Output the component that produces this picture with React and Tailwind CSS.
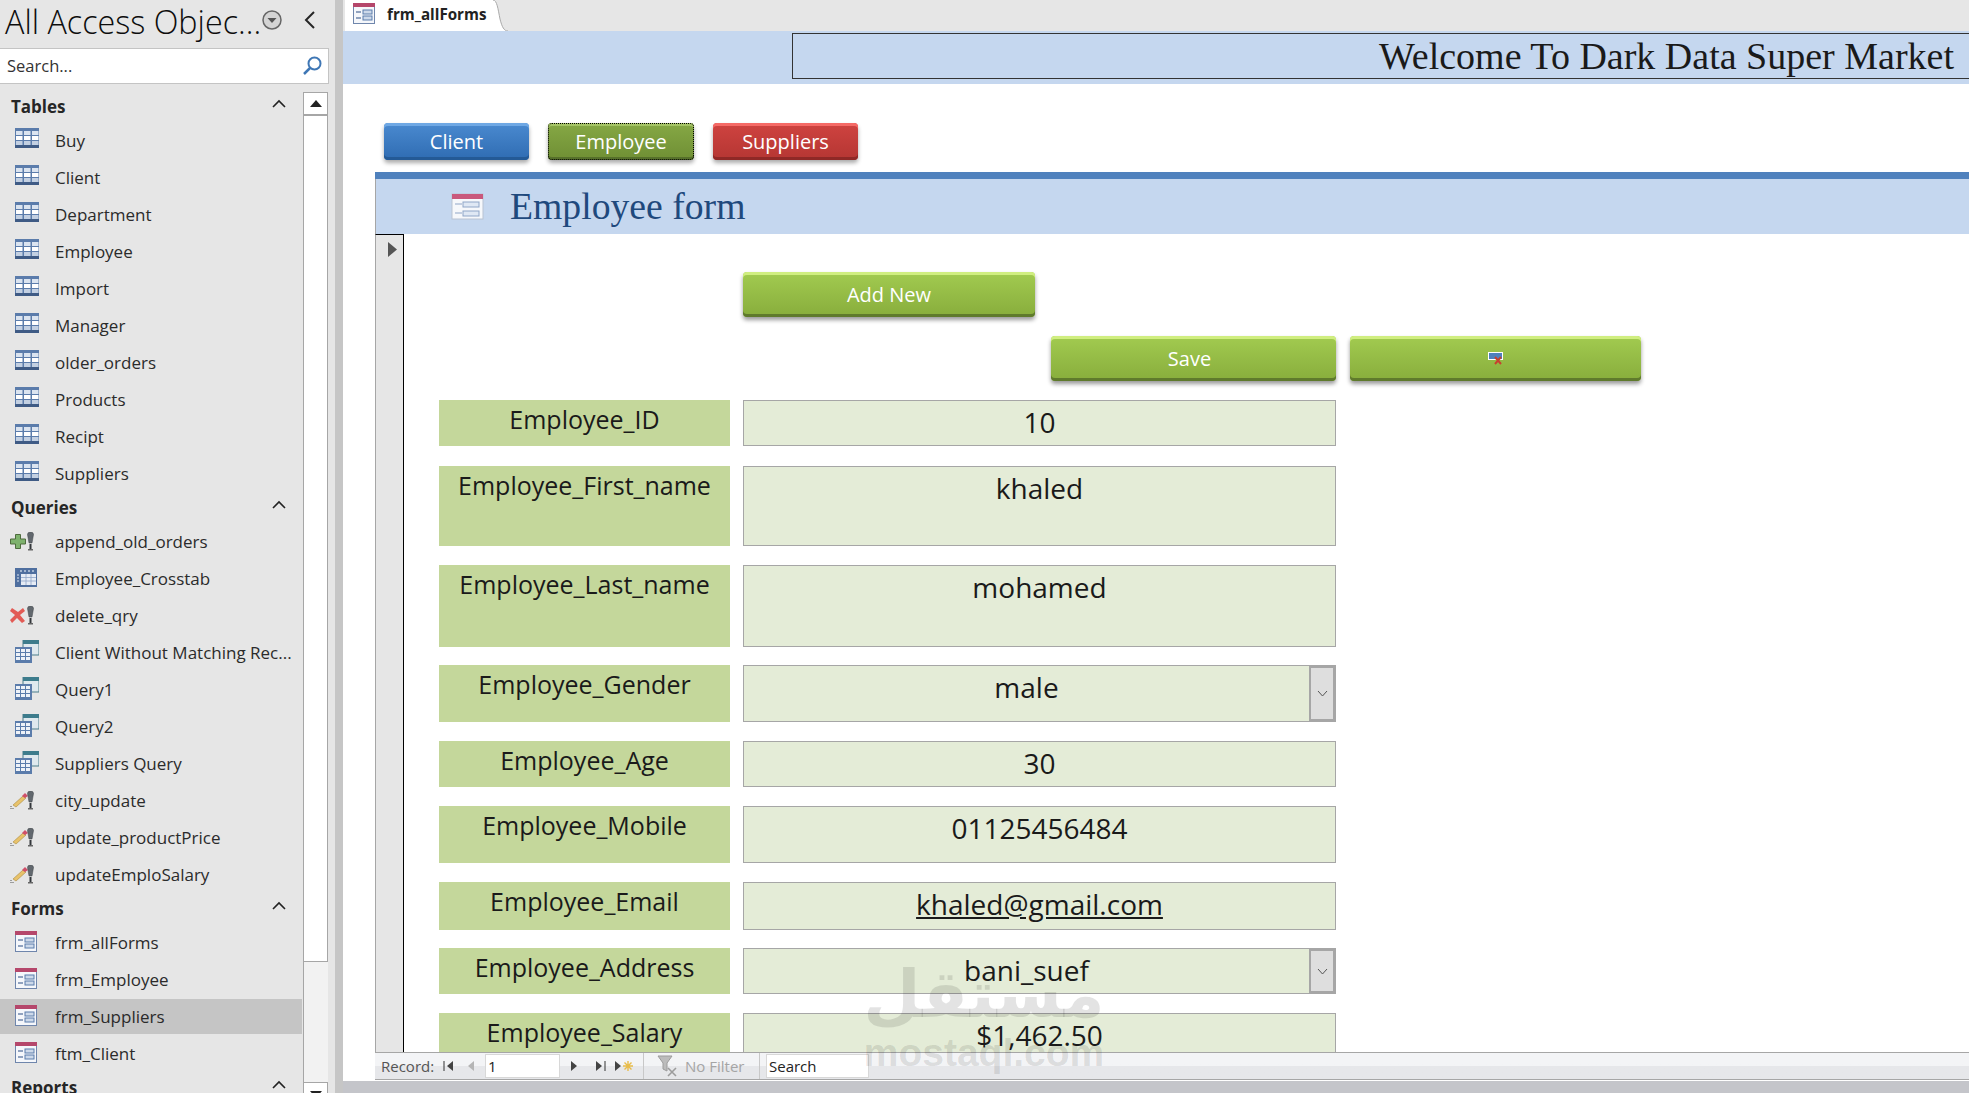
const sans = "font-['Open_Sans',sans-serif]"

function TableIcon() {
  return (
    <svg width="24" height="20" viewBox="0 0 24 20" className="shrink-0 -translate-y-[3px]">
      <rect width="24" height="20" fill="#5b7cab" />
      <rect y="17" width="24" height="3" fill="#3f5b85" />
      {[3, 8, 13].map((y) =>
        [1, 9, 17].map((x) => <rect key={x + "-" + y} x={x} y={y} width="6.5" height="4" fill={y === 8 ? "#ffffff" : y === 3 ? "#dbe4f0" : "#c3d0e2"} />)
      )}
    </svg>
  )
}

function FormIcon() {
  return (
    <svg width="22" height="21" viewBox="0 0 22 21" className="shrink-0 -translate-y-[1px]">
      <rect x="0.5" y="0.5" width="21" height="20" fill="#f5f7fb" stroke="#6f86ac" />
      <rect width="22" height="4" fill="#b5476b" />
      <path d="M3 9h5M3 15h5" stroke="#6f86ac" strokeWidth="1.5" />
      <rect x="10" y="7" width="9" height="4" fill="#cdd9ea" stroke="#5b7cab" />
      <rect x="10" y="13" width="9" height="4" fill="#cdd9ea" stroke="#5b7cab" />
    </svg>
  )
}

function SelectQueryIcon() {
  return (
    <svg width="24" height="23" viewBox="0 0 24 23" className="shrink-0 -translate-y-[1px]">
      <rect x="8" y="0" width="16" height="15" fill="#dfe9ee" stroke="#4a7d8a" />
      <rect x="8" y="0" width="16" height="4" fill="#3d7c8c" />
      <rect x="0" y="7" width="17" height="16" fill="#5b7cab" />
      {[9, 13, 17].map((y) => [1, 6, 11].map((x) => <rect key={x + "-" + y} x={x} y={y} width="4" height="3" fill="#eef2f8" />))}
    </svg>
  )
}

function CrosstabIcon() {
  return (
    <svg width="22" height="19" viewBox="0 0 22 19" className="shrink-0 -translate-y-[1px]">
      <rect width="22" height="19" fill="#4f6f9f" />
      <path d="M6 2v2M10 2v2M14 2v2M18 2v2M2 7h2M2 10h2M2 13h2" stroke="#dbe4f0" strokeWidth="1.2" />
      <rect x="6" y="6" width="15" height="11" fill="#e6ecf5" />
      <path d="M6 9.5h15M6 13h15M11 6v11M16 6v11" stroke="#8fa6c8" strokeWidth="0.8" />
    </svg>
  )
}

function ActionIcon({ type }) {
  return (
    <svg width="26" height="20" viewBox="0 0 26 20" className="shrink-0 -ml-[5px]">
      {type === "add" && <path d="M5.5 2.5h5v4.5h5v5h-5v4.5h-5V12H.5V7h5z" fill="#7eb26d" stroke="#4e6b3d" />}
      {type === "delete" && <path d="M2 2l6 4 5-4 2 3-5 4 5 6-3 2-5-5-5 5-2-3 5-5-5-4z" fill="#e25b55" />}
      {type === "update" && (
        <g>
          <path d="M3 14l10-9 3 2-10 9z" fill="#e8c26a" stroke="#a98a3f" strokeWidth="0.6" />
          <path d="M12 5l3-3 3 3-3 2z" fill="#d0506a" />
          <path d="M1 15v4M3 17v2" stroke="#555" strokeDasharray="1 1" />
        </g>
      )}
      <path d="M17.5 2.5Q17.5 0 20.5 0T23.5 2.5L22 11h-3z" fill="#62686e" stroke="#3c4045" strokeWidth="0.5" />
      <rect x="19.5" y="12" width="2" height="5" fill="#33373b" />
      <rect x="18" y="17" width="5" height="1.5" fill="#666" />
    </svg>
  )
}

function Chevron() {
  return (
    <svg width="14" height="9" viewBox="0 0 14 9">
      <path d="M1 8l6-6 6 6" fill="none" stroke="#222" strokeWidth="1.6" />
    </svg>
  )
}

function Section({ title }) {
  return (
    <div className="h-[31px] flex items-center justify-between pl-[11px] pr-[17px]">
      <span className="font-bold text-[17px] text-[#262626] leading-normal">{title}</span>
      <span className="-mt-[6px] flex"><Chevron /></span>
    </div>
  )
}

function Item({ label, icon, selected }) {
  return (
    <div className="h-[37px] flex items-center">
      <div className={"w-[302px] h-[35px] flex items-center " + (selected ? "bg-[#c5c5c5]" : "")}>
        <span className="w-[55px] pl-[15px] flex items-center shrink-0">{icon}</span>
        <span className="text-[17px] text-[#2b2b2b] leading-normal whitespace-nowrap">{label}</span>
      </div>
    </div>
  )
}

function Sidebar() {
  const tables = ["Buy", "Client", "Department", "Employee", "Import", "Manager", "older_orders", "Products", "Recipt", "Suppliers"]
  return (
    <div className="w-[335px] shrink-0 h-full bg-[#e6e6e6] flex flex-col overflow-hidden">
      <div className="h-[48px] shrink-0 flex items-center pl-[5px] pb-[8px]">
        <span className="w-[257px] text-[32.3px] font-light text-[#0d0d0d] leading-normal whitespace-nowrap translate-y-[1px]">All Access Objec...</span>
        <svg width="20" height="20" viewBox="0 0 20 20">
          <circle cx="10" cy="10" r="9" fill="#d4d4d4" stroke="#666" strokeWidth="1.5" />
          <path d="M5.5 8h9L10 13z" fill="#555" />
        </svg>
        <svg width="12" height="18" viewBox="0 0 12 18" className="ml-[22px]">
          <path d="M10 1L2 9l8 8" fill="none" stroke="#262626" strokeWidth="2" />
        </svg>
      </div>
      <div className="h-[36px] shrink-0 w-[329px] bg-white border border-[#c4c4c4] border-l-0 flex items-center justify-between pl-[7px] pr-[6px]">
        <span className="text-[16.5px] text-[#333] pt-px">Search...</span>
        <svg width="20" height="20" viewBox="0 0 20 20">
          <circle cx="12.5" cy="7.5" r="6" fill="none" stroke="#3f77b5" strokeWidth="2" />
          <path d="M8 12l-6 6" stroke="#3f77b5" strokeWidth="2.5" />
        </svg>
      </div>
      <div className="flex flex-1 mt-[8px] min-h-0">
        <div className="w-[303px] shrink-0 -mt-px">
          <Section title="Tables" />
          {tables.map((t) => <Item key={t} label={t} icon={<TableIcon />} />)}
          <Section title="Queries" />
          <Item label="append_old_orders" icon={<ActionIcon type="add" />} />
          <Item label="Employee_Crosstab" icon={<CrosstabIcon />} />
          <Item label="delete_qry" icon={<ActionIcon type="delete" />} />
          <Item label="Client Without Matching Rec..." icon={<SelectQueryIcon />} />
          <Item label="Query1" icon={<SelectQueryIcon />} />
          <Item label="Query2" icon={<SelectQueryIcon />} />
          <Item label="Suppliers Query" icon={<SelectQueryIcon />} />
          <Item label="city_update" icon={<ActionIcon type="update" />} />
          <Item label="update_productPrice" icon={<ActionIcon type="update" />} />
          <Item label="updateEmploSalary" icon={<ActionIcon type="update" />} />
          <Section title="Forms" />
          <Item label="frm_allForms" icon={<FormIcon />} />
          <Item label="frm_Employee" icon={<FormIcon />} />
          <Item label="frm_Suppliers" icon={<FormIcon />} selected />
          <Item label="ftm_Client" icon={<FormIcon />} />
          <Section title="Reports" />
        </div>
        {/* scrollbar */}
        <div className="w-[25px] shrink-0 bg-[#f2f2f2] border-l border-[#a6a6a6] flex flex-col">
          <div className="h-[24px] shrink-0 bg-white border border-l-0 border-[#a6a6a6] border-b-2 flex items-center justify-center">
            <svg width="12" height="7" viewBox="0 0 12 7"><path d="M0 7l6-7 6 7z" fill="#222" /></svg>
          </div>
          <div className="h-[846px] shrink-0 bg-white border-r border-b border-[#a6a6a6]" />
          <div className="mt-[120px] h-[24px] shrink-0 bg-white border border-l-0 border-[#a6a6a6] flex justify-center pt-[8px]">
            <svg width="12" height="7" viewBox="0 0 12 7"><path d="M0 0l6 7 6-7z" fill="#222" /></svg>
          </div>
        </div>
      </div>
    </div>
  )
}

function GlossyButton({ color, className, children, dotted }) {
  const styles = {
    blue: "bg-linear-to-b from-[#4a8ad0] to-[#2f6cb2] shadow-[inset_0_3px_0_#6fa8e4,inset_0_-3px_0_#245a96,0_3px_4px_#00000055]",
    olive: "bg-linear-to-b from-[#86a845] to-[#6f8f34] shadow-[inset_0_3px_0_#a5c466,inset_0_-3px_0_#56702a,0_3px_4px_#00000055]",
    red: "bg-linear-to-b from-[#cf4340] to-[#b53633] shadow-[inset_0_3px_0_#f56a66,inset_0_-3px_0_#8f2826,0_3px_4px_#00000055]",
    green: "bg-linear-to-b from-[#a2cb50] to-[#88ad3c] shadow-[inset_0_3px_0_#d0ee80,inset_0_-3px_0_#5f7a2c,0_3px_4px_#00000066]",
  }
  return (
    <div className={"flex items-center justify-center text-white rounded-[4px] " + styles[color] + " " + className}>
      {dotted && <div className="absolute inset-0 rounded-[4px] border border-dotted border-black" />}
      {children}
    </div>
  )
}

function Row({ label, value, h, select, underline, mt, shift }) {
  return (
    <div className={"flex gap-[13px] shrink-0 " + mt} style={{ height: h }}>
      <div className="w-[291px] bg-[#c4d79b] text-center text-[25px] leading-none text-[#1a1a1a] pt-[7px] whitespace-nowrap">{label}</div>
      <div className="w-[593px] bg-[#e4ecd7] border border-[#a6a6a6] flex">
        <div className={"flex-1 text-center text-[28px] leading-none text-[#1a1a1a] pt-[7px] " + (underline ? "underline " : "") + (shift || "")}>{value}</div>
        {select && (
          <div className="w-[26px] bg-[#dedede] border-2 border-[#a6a6a6] flex items-center justify-center">
            <svg width="11" height="7" viewBox="0 0 11 7"><path d="M1 1l4.5 5L10 1" fill="none" stroke="#555" /></svg>
          </div>
        )}
      </div>
    </div>
  )
}

function NavBar() {
  return (
    <div className="h-[28px] shrink-0 border-y border-[#a6a6a6] bg-linear-to-b from-[#f3f4f6] from-50% to-[#e6e7ea] to-50% flex items-center text-[15px] leading-normal relative">
      <span className="ml-[6px] w-[62px] text-[#555]">Record:</span>
      <svg width="12" height="12" viewBox="0 0 12 12" className="shrink-0"><path d="M1 1v10" stroke="#333" /><path d="M10 1v10L4 6z" fill="#444" /></svg>
      <svg width="8" height="12" viewBox="0 0 8 12" className="ml-[12px] shrink-0"><path d="M7 1v10L1 6z" fill="#b5b5b5" /></svg>
      <div className="ml-[10px] w-[75px] h-[24px] bg-white border border-[#d8d8d8] flex items-center pl-[2px] text-[#222]">1</div>
      <svg width="8" height="12" viewBox="0 0 8 12" className="ml-[10px] shrink-0"><path d="M1 1v10l6-5z" fill="#444" /></svg>
      <svg width="12" height="12" viewBox="0 0 12 12" className="ml-[17px] shrink-0"><path d="M1 1v10l6-5z" fill="#444" /><path d="M10 1v10" stroke="#333" /></svg>
      <svg width="22" height="12" viewBox="0 0 22 12" className="ml-[7px] shrink-0">
        <path d="M1 1v10l6-5z" fill="#444" />
        <path d="M14 1v10M9 6h10M10.5 2.5l7 7M17.5 2.5l-7 7" stroke="#e8bc4a" strokeWidth="1.4" />
      </svg>
      <div className="ml-[7px] w-px h-full bg-[#c8c8c8]" />
      <svg width="22" height="22" viewBox="0 0 22 22" className="ml-[13px] shrink-0">
        <path d="M1 1h14L10 8v8l-4-2V8z" fill="#bcbcbc" stroke="#9c9c9c" />
        <path d="M11 13l8 8M19 13l-8 8" stroke="#9c9c9c" strokeWidth="1.6" />
      </svg>
      <span className="ml-[6px] w-[74px] text-[#a5a5a5] whitespace-nowrap">No Filter</span>
      <div className="w-px h-full bg-[#c8c8c8]" />
      <div className="ml-[6px] w-[103px] h-[24px] bg-white border border-[#d8d8d8] flex items-center pl-[2px] text-[#222]">Search</div>
    </div>
  )
}

export default function App() {
  return (
    <div className={"w-full h-screen flex overflow-hidden bg-white relative " + sans}>
      <Sidebar />
      <div className="w-[8px] shrink-0 bg-[#c6c6c6]" />
      <div className="flex-1 min-w-0 flex flex-col">
        {/* tab strip */}
        <div className="h-[31px] shrink-0 bg-[#e6e6e6] flex pl-[2px]">
          <div className="w-[145px] h-full bg-white flex items-center pl-[8px] pb-[3px] gap-[12px]">
            <FormIcon />
            <span className="font-bold text-[15.2px] text-[#222] leading-normal whitespace-nowrap">frm_allForms</span>
          </div>
          <svg width="18" height="31" viewBox="0 0 18 31" className="shrink-0">
            <path d="M0 0H3C7 0 8 9 10 19 12 27 14 31 18 31H0Z" fill="#fff" />
            <path d="M3 0C7 0 8 9 10 19 12 27 14 31 18 31" fill="none" stroke="#aaa" />
          </svg>
        </div>
        {/* title band */}
        <div className="h-[53px] shrink-0 bg-[#c5d7ef] pl-[449px] pt-[2px]">
          <div className="h-[46px] border border-r-0 border-[#333] flex items-center justify-end pr-[15px] font-['Liberation_Serif',serif] text-[38px] leading-none text-[#1a1a1a] whitespace-nowrap">
            Welcome To Dark Data Super Market
          </div>
        </div>
        {/* form switch buttons */}
        <div className="flex gap-[19px] pl-[41px] pt-[39px] shrink-0">
          <GlossyButton color="blue" className="w-[145px] h-[37px] text-[20px]">Client</GlossyButton>
          <GlossyButton color="olive" className="w-[146px] h-[37px] text-[20px] relative" dotted>Employee</GlossyButton>
          <GlossyButton color="red" className="w-[145px] h-[37px] text-[20px]">Suppliers</GlossyButton>
        </div>
        {/* subform */}
        <div className="mt-[12px] ml-[32px] flex-1 min-h-0 flex flex-col">
          <div className="h-[7px] shrink-0 bg-[#4f81bd]" />
          <div className="h-[55px] shrink-0 bg-[#c5d7ef] border-l border-[#a6a6a6] flex items-center pl-[75px] gap-[26px]">
            <svg width="33" height="27" viewBox="0 0 33 27" className="shrink-0">
              <rect x="1" y="1" width="31" height="25" fill="#f6f8fb" stroke="#b9c3d2" />
              <rect x="1" y="1" width="31" height="5" fill="#c9587c" />
              <path d="M4 11h7M4 20h7" stroke="#8fa6c8" strokeWidth="1.2" />
              <rect x="12" y="9" width="16" height="5" fill="#dfe8f4" stroke="#8fa6c8" />
              <rect x="12" y="18" width="16" height="5" fill="#dfe8f4" stroke="#8fa6c8" />
            </svg>
            <span className="font-['Liberation_Serif',serif] text-[37.7px] leading-none text-[#1f497d] whitespace-nowrap">Employee form</span>
          </div>
          <div className="flex-1 min-h-0 flex overflow-hidden">
            <div className="w-[29px] shrink-0 bg-[#e6e6e6] border-l border-[#a6a6a6] border-r border-r-black border-t border-t-black flex justify-center pt-[7px]">
              <svg width="9" height="15" viewBox="0 0 9 15" className="ml-[6px]"><path d="M0 0l9 7.5L0 15z" fill="#555" /></svg>
            </div>
            <div className="flex-1 pl-[35px] pt-[38px] flex flex-col">
              <div className="pl-[304px] shrink-0">
                <GlossyButton color="green" className="w-[292px] h-[45px] text-[20px]">Add New</GlossyButton>
              </div>
              <div className="pl-[612px] pt-[19px] flex gap-[14px] shrink-0">
                <GlossyButton color="green" className="w-[285px] h-[45px] text-[20px] pr-[8px]">Save</GlossyButton>
                <GlossyButton color="green" className="w-[291px] h-[45px]">
                  <svg width="16" height="13" viewBox="0 0 16 13">
                    <rect x="0.5" y="0.5" width="14" height="7" fill="#4f81bd" stroke="#fff" />
                    <path d="M7 5l6 7M13 5l-6 7" stroke="#c8402f" strokeWidth="2" />
                  </svg>
                </GlossyButton>
              </div>
              <Row mt="mt-[19px]" h={46} label="Employee_ID" value="10" />
              <Row mt="mt-[20px]" h={80} label="Employee_First_name" value="khaled" />
              <Row mt="mt-[19px]" h={82} label="Employee_Last_name" value="mohamed" />
              <Row mt="mt-[18px]" h={57} label="Employee_Gender" value="male" select />
              <Row mt="mt-[19px]" h={46} label="Employee_Age" value="30" />
              <Row mt="mt-[19px]" h={57} label="Employee_Mobile" value="01125456484" />
              <Row mt="mt-[19px]" h={48} label="Employee_Email" value="khaled@gmail.com" underline />
              <Row mt="mt-[18px]" h={46} label="Employee_Address" value="bani_suef" select />
              <Row mt="mt-[19px]" h={46} label="Employee_Salary" value="$1,462.50" />
            </div>
          </div>
          <NavBar />
        </div>
        <div className="h-px shrink-0 bg-white" />
        <div className="h-[12px] shrink-0 bg-[#c4c5ca]" />
      </div>
      {/* mostaql watermark */}
      <div className="absolute left-[864px] top-[962px] w-[240px] flex flex-col items-center pointer-events-none text-[#0000001c] font-bold leading-none">
        <span className="font-['DejaVu_Sans',sans-serif] text-[66px] leading-none">مستقل</span>
        <span className="text-[39px] mt-[5px] font-['Liberation_Sans',sans-serif]">mostaql.com</span>
      </div>
    </div>
  )
}
